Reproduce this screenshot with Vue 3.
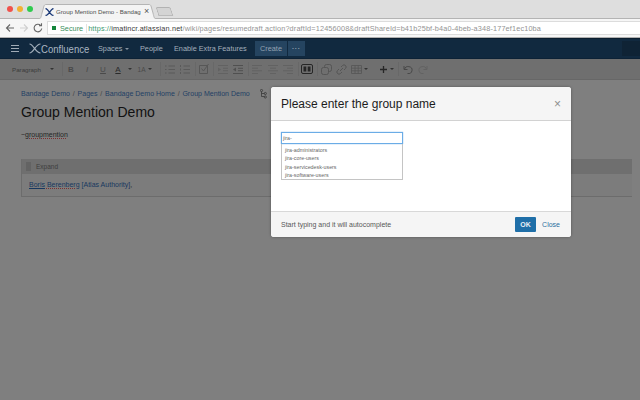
<script setup>
const items = ['jira-administrators','jira-core-users','jira-servicedesk-users','jira-software-users']
</script>

<template>
  <div class="page">
    <div class="tabstrip">
      <span class="dot red"></span><span class="dot yellow"></span><span class="dot green"></span>
      <div class="tab">
        <svg class="tabshape" width="119" height="15" viewBox="0 0 119 15"><path d="M0 15c3 0 3-2 4-6l2-7c.4-1 1-1.500 2-1.500h103c1 0 1.600.5 2 1.500l2 7c1 4 1 6 4 6" fill="#f4f4f4" stroke="#b5b5b5"/></svg>
        <svg class="favicon" width="9" height="8" viewBox="0 0 9 8"><path d="M.5.5c3 0 4.500 7 8 7M8.500.5c-3 0-4.500 7-8 7" fill="none" stroke="#1c3a78" stroke-width="1.300"/></svg>
        <span class="tabtitle">Group Mention Demo - Bandag</span>
        <span class="tabx">×</span>
      </div>
      <div class="newtab"></div>
    </div>
    <div class="urlbar">
      <svg class="navicon" width="12" height="12" viewBox="0 0 12 12"><path d="M10 6H2.500M6 2.500L2.500 6 6 9.500" fill="none" stroke="#666" stroke-width="1.100"/></svg>
      <svg class="navicon" width="12" height="12" viewBox="0 0 12 12"><path d="M2 6h7.500M6 2.500L9.500 6 6 9.500" fill="none" stroke="#cfcfcf" stroke-width="1.100"/></svg>
      <svg class="navicon" width="12" height="12" viewBox="0 0 12 12"><path d="M9.700 6.500A3.800 3.800 0 1 1 8.600 3.300M9.500 1.200v2.600H7" fill="none" stroke="#666" stroke-width="1.100"/></svg>
      <div class="omnibox">
        <span class="lock"></span>
        <span class="secure">Secure</span>
        <span class="sep"></span>
        <span class="url"><span class="scheme">https://</span><span class="host">imatincr.atlassian.net</span>/wiki/pages/resumedraft.action?draftId=12456008&amp;draftShareId=b41b25bf-b4a0-4beb-a348-177ef1ec10ba</span>
      </div>
    </div>
    <nav class="nav">
      <div class="burger"><i></i><i></i><i></i></div>
      <svg class="logo" width="12" height="11" viewBox="0 0 12 11"><path d="M.5 1c4 0 6 9 11 9M11.500 1c-5 0-7 9-11 9" fill="none" stroke="#a4b0bc" stroke-width="1.200"/></svg>
      <span class="brandbox"><span class="brand">Confluence</span></span>
      <span class="navlink spaces">Spaces<b class="caret"></b></span>
      <span class="navlink people">People</span>
      <span class="navlink features">Enable Extra Features</span>
      <span class="create">Create</span>
      <span class="more">•••</span>
      <span class="navend"></span>
    </nav>
    <div class="toolbar">
      <div class="g g0"><span class="para">Paragraph</span><b class="caret dark"></b></div>
      <div class="g g1">
        <span class="tool tB">B</span><span class="tool tI">I</span><span class="tool tU">U</span>
        <span class="tool tA">A</span><span class="cw"><b class="caret dark"></b></span>
        <span class="tool size">1A</span><b class="caret dark"></b>
      </div>
      <div class="g g2">
        <svg width="10" height="9" viewBox="0 0 10 9"><path d="M0 1h1.500M0 4.500h1.500M0 8h1.500M3.500 1H10M3.500 4.500H10M3.500 8H10" stroke="#5a5a5a"/></svg>
        <svg width="10" height="9" viewBox="0 0 10 9"><path d="M.5 0v2M.5 3.500v2M.5 7v2M3.500 1H10M3.500 4.500H10M3.500 8H10" stroke="#5a5a5a"/></svg>
      </div>
      <div class="g g3">
        <svg width="12" height="12" viewBox="0 0 12 12"><path d="M1.500 2.500h8v8h-8z" fill="none" stroke="#575757"/><path d="M3.500 5.500l2 2.500 5-7" fill="none" stroke="#575757"/></svg>
      </div>
      <div class="g g4">
        <svg width="10" height="9" viewBox="0 0 10 9"><path d="M0 .5h10M5 3.300h5M5 5.700h5M0 8.500h10" stroke="#626262"/><path d="M0 2.500L3 4.500 0 6.500z" fill="#626262"/></svg>
        <svg width="10" height="9" viewBox="0 0 10 9"><path d="M0 .5h10M5 3.300h5M5 5.700h5M0 8.500h10" stroke="#505050"/><path d="M3 2.500L0 4.500 3 6.500z" fill="#505050"/></svg>
      </div>
      <div class="g g5">
        <svg width="10" height="9" viewBox="0 0 10 9"><path d="M0 .5h10M0 3.200h6M0 5.800h10M0 8.500h6" stroke="#626262"/></svg>
        <svg width="10" height="9" viewBox="0 0 10 9"><path d="M0 .5h10M2 3.200h6M0 5.800h10M2 8.500h6" stroke="#626262"/></svg>
        <svg width="10" height="9" viewBox="0 0 10 9"><path d="M0 .5h10M4 3.200h6M0 5.800h10M4 8.500h6" stroke="#626262"/></svg>
      </div>
      <div class="g g6">
        <svg width="12" height="10" viewBox="0 0 12 10"><rect x=".5" y=".5" width="11" height="9" rx="1.500" fill="none" stroke="#262626"/><path d="M2.500 2.500h2.800v5H2.500zM6.700 2.500h2.800v5H6.700z" fill="#262626"/></svg>
      </div>
      <div class="g g7">
        <svg width="11" height="11" viewBox="0 0 11 11"><rect x="3.500" y=".5" width="7" height="7" rx="2" fill="none" stroke="#555"/><rect x=".5" y="3.500" width="7" height="7" rx="2" fill="#6f6f6f" stroke="#555"/></svg>
        <svg width="11" height="11" viewBox="0 0 11 11"><path d="M4 7l3-3M3 5L1.500 6.500a2 2 0 0 0 3 3L6 8M5 3l1.500-1.500a2 2 0 0 1 3 3L8 6" fill="none" stroke="#555"/></svg>
        <svg width="11" height="9" viewBox="0 0 11 9"><path d="M.5.5h10v8H.5zM.5 3.200h10M.5 5.800h10M4 .5v8M7.200.5v8" fill="none" stroke="#555" stroke-width=".8"/></svg>
        <b class="caret dark c7"></b>
        <svg class="plus" width="7" height="7" viewBox="0 0 7 7"><path d="M3.500 0v7M0 3.500h7" stroke="#262626" stroke-width="1.300"/></svg>
        <b class="caret dark c7b"></b>
      </div>
      <div class="g g8">
        <svg width="10" height="9" viewBox="0 0 10 9"><path d="M1.500 4.500a3.800 3.500 0 1 1 3 4M1 1v3.500h3.500" fill="none" stroke="#484848"/></svg>
        <svg width="10" height="9" viewBox="0 0 10 9"><path d="M8.500 4.500a3.800 3.500 0 1 0-3 4M9 1v3.500H5.500" fill="none" stroke="#626262"/></svg>
      </div>
    </div>
    <main class="content">
      <div class="crumbs">
        <span>Bandage Demo</span><em>/</em><span>Pages</span><em>/</em><span>Bandage Demo Home</span><em>/</em><span>Group Mention Demo</span>
        <svg class="tree" width="7" height="10" viewBox="0 0 7 10"><path d="M1.500 2.500v5h3M1.500 4.500h3" fill="none" stroke="#3a3a3a" stroke-width=".8"/><circle cx="1.500" cy="1.500" r="1.100" fill="none" stroke="#3a3a3a" stroke-width=".8"/><circle cx="5.300" cy="4.500" r="1.100" fill="none" stroke="#3a3a3a" stroke-width=".8"/><circle cx="5.300" cy="8" r="1.100" fill="none" stroke="#3a3a3a" stroke-width=".8"/></svg>
      </div>
      <h1>Group Mention Demo</h1>
      <p class="macro">~<span class="spell">groupmention</span></p>
      <section class="expand">
        <div class="exhead"><span class="grip"></span><span>Expand</span></div>
        <div class="exbody"><span class="link"><u>Boris</u> <span class="spell">Berenberg</span> [Atlas Authority]</span>,</div>
      </section>
    </main>
    <div class="modal">
      <header class="mhead"><h2>Please enter the group name</h2><span class="mx">×</span></header>
      <div class="mbody">
        <div class="combo">
          <div class="input">jira-</div>
          <ul class="list"><li v-for="i in items" :key="i">{{ i }}</li></ul>
        </div>
      </div>
      <footer class="mfoot">
        <span class="hint">Start typing and it will autocomplete</span>
        <span class="ok">OK</span>
        <span class="close">Close</span>
      </footer>
    </div>
  </div>
</template>

<style>
html, body { margin: 0; }
</style>

<style scoped>
.page { position: relative; width: 640px; height: 400px; overflow: hidden; background: #7f7f7f; font-family: "Liberation Sans", Arial, sans-serif; display: flex; flex-direction: column; }

.tabstrip { height: 19px; flex: none; box-sizing: border-box; background: #dedede; border-bottom: 1px solid #b4b4b4; display: flex; align-items: center; padding-left: 7px; gap: 4px; }
.dot { width: 6px; height: 6px; border-radius: 50%; }
.red { background: #f0524c; } .yellow { background: #f2b134; } .green { background: #2fcb4e; }
.tab { position: relative; align-self: flex-end; margin: 0 -4px -1px 1px; width: 119px; height: 15px; box-sizing: border-box; display: flex; align-items: center; padding-left: 7px; }
.tabshape { position: absolute; left: 0; top: 0; }
.favicon { position: relative; flex: none; margin-right: 2px; }
.tabtitle { position: relative; width: 87px; flex: none; font-size: 6.100px; color: #4e4e4e; white-space: nowrap; }
.tabx { position: relative; font-size: 9px; line-height: 9px; color: #555; margin-left: 1px; }
.newtab { width: 13px; height: 7px; margin-top: 5px; background: #d4d4d4; border: 1px solid #b2b2b2; border-bottom-color: #bbb; border-radius: 2px 2px 0 0; transform: skewX(18deg); }

.urlbar { height: 19px; flex: none; box-sizing: border-box; background: #f6f6f6; border-bottom: 1px solid #b0b0b0; display: flex; align-items: center; padding-left: 4px; gap: 2px; }
.navicon { flex: none; }
.omnibox { margin-left: 1px; flex: 1; height: 14px; box-sizing: border-box; background: #fff; border: 1px solid #dcdcdc; border-right: none; display: flex; align-items: center; padding-left: 4px; font-size: 7.300px; white-space: nowrap; overflow: hidden; }
.lock { width: 4px; height: 4px; flex: none; background: #14853a; margin-right: 4px; }
.secure { color: #3a8f5c; }
.sep { width: 1px; height: 9px; background: #e2e2e2; margin: 0 0 0 3px; }
.url { color: #939393; letter-spacing: .145px; margin-left: 1px; }
.scheme { color: #3c9a70; }
.host { color: #3a3a3a; }

.nav { height: 21px; flex: none; box-sizing: border-box; background: #11293f; border-top: 1px solid #0b1d2e; border-bottom: 1px solid #0d2236; display: flex; align-items: center; padding-left: 11px; color: #a3afbb; font-size: 7.300px; white-space: nowrap; }
.burger { width: 8px; display: flex; flex-direction: column; gap: 2px; margin-right: 10px; }
.burger i { height: 1px; background: #a0abb6; display: block; }
.logo { flex: none; }
.brandbox { width: 57px; flex: none; }
.brand { display: inline-block; font-size: 11.500px; color: #aab6c2; transform: scaleX(.83); transform-origin: left center; }
.spaces { width: 42px; flex: none; }
.people { width: 34px; flex: none; }
.features { width: 81px; flex: none; }
.caret { display: inline-block; width: 0; height: 0; border: 2px solid transparent; border-top-color: #8793a0; border-bottom: none; vertical-align: middle; margin-left: 3px; }
.caret.dark { border-top-color: #333; margin: 0; flex: none; }
.create { background: #254460; width: 32px; height: 15px; line-height: 15px; text-align: center; margin-right: 1px; flex: none; color: #93a2b1; }
.more { background: #254460; width: 17px; height: 15px; line-height: 15px; text-align: center; font-size: 4px; flex: none; color: #a3afbb; letter-spacing: 1.400px; }
.navend { width: 18px; height: 15px; margin-left: auto; background: #0f2335; }

.toolbar { height: 21px; flex: none; box-sizing: border-box; background: #6f6f6f; border-bottom: 1px solid #676767; display: flex; align-items: center; padding-left: 12px; color: #4a4a4a; font-size: 8px; }
.g { box-sizing: border-box; display: flex; align-items: center; height: 14px; flex: none; border-left: 1px solid #686868; }
.g svg { flex: none; }
.g0 { width: 50px; border-left: none; }
.para { font-size: 6.200px; width: 38px; color: #3c3c3c; }
.g1 { width: 98px; }
.tool { text-align: center; width: 16px; flex: none; }
.tB { font-weight: bold; } .tI { font-style: italic; } .tU { text-decoration: underline; }
.tA { width: 14px; color: #2a2a2a; text-decoration: underline; }
.cw { width: 10px; display: flex; justify-content: center; flex: none; }
.size { font-size: 6.500px; width: 13px; }
.g2 { width: 35px; padding-left: 4px; gap: 5px; }
.g3 { width: 18px; padding-left: 2px; }
.g4 { width: 35px; padding-left: 4px; gap: 5px; }
.g5 { width: 50px; padding-left: 3px; gap: 5.500px; }
.g6 { width: 19px; padding-left: 2px; }
.g7 { width: 81px; padding-left: 3px; gap: 4px; }
.c7 { margin-left: -2px !important; }
.plus { margin-left: 8px; }
.c7b { margin-left: -1px !important; }
.g8 { width: 35px; padding-left: 4px; gap: 5px; }

.content { padding: 9px 0 0 21px; }
.crumbs { font-size: 7.050px; color: #1f3f65; white-space: nowrap; display: flex; align-items: center; height: 9px; }
.crumbs em { font-style: normal; color: #444; margin: 0 2.800px; }
.tree { margin-left: 10px; }
h1 { margin: 5px 0 0; font-size: 14px; font-weight: normal; color: #111; line-height: 18px; }
.macro { margin: 9px 0 0; font-size: 7px; color: #262626; line-height: 10px; }
.spell { text-decoration: underline dotted #7b3030 1px; }
.expand { margin-top: 19px; box-sizing: border-box; background: #7c7c7c; border-left: 1px solid #6c6c6c; border-bottom: 1px solid #6c6c6c; width: 611px; height: 38px; }
.exhead { height: 15px; background: #6f6f6f; display: flex; align-items: center; font-size: 6.500px; color: #3e3e3e; padding-left: 4px; gap: 5px; }
.grip { width: 5px; height: 9px; background: #636363; }
.exbody { padding: 6px 7px; font-size: 7px; line-height: 10px; color: #262626; }
.link { color: #18385f; }

.modal { position: absolute; left: 271px; top: 87px; width: 300px; height: 150px; background: #fff; border-radius: 3px; box-shadow: 0 0 3px rgba(0,0,0,.35); display: flex; flex-direction: column; overflow: hidden; }
.mhead { height: 34px; flex: none; box-sizing: border-box; background: #f5f5f5; border-bottom: 1px solid #d2d2d2; display: flex; align-items: center; justify-content: space-between; padding: 0 10px; }
h2 { margin: 0; font-size: 12px; font-weight: normal; color: #1c1c1c; }
.mx { font-size: 12px; line-height: 12px; color: #8e8e8e; }
.mbody { flex: 1; padding: 11px 10px 0; }
.combo { width: 122px; }
.input { box-sizing: border-box; height: 12px; border: 1px solid #6bace6; box-shadow: 0 0 1px #6bace6; font-size: 5.300px; line-height: 10px; color: #666; padding-left: 1px; }
.list { box-sizing: border-box; margin: 0; padding: 2px 3px; list-style: none; border: 1px solid #c4c4c4; border-top: none; width: 122px; height: 36px; font-size: 5.300px; color: #666; line-height: 8.300px; }
.mfoot { height: 26px; flex: none; box-sizing: border-box; background: #f5f5f5; border-top: 1px solid #d8d8d8; display: flex; align-items: center; padding: 0 11px 0 10px; font-size: 7px; color: #585858; }
.hint { flex: 1; }
.ok { width: 21px; height: 15px; line-height: 15px; text-align: center; background: #1f6fa8; color: #e8f0f6; font-weight: bold; border-radius: 1px; margin-right: 6px; }
.close { color: #2c6f9f; }
</style>
